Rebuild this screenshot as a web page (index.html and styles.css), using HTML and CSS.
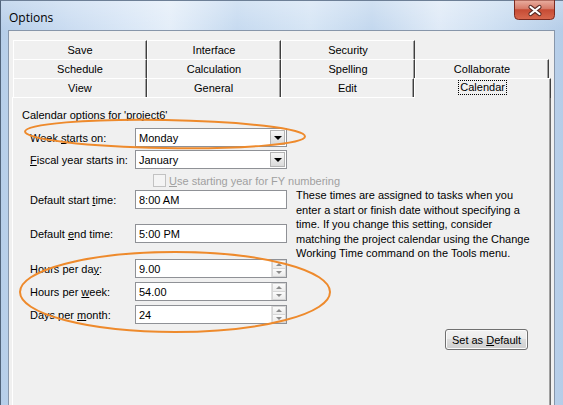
FILE: index.html
```html
<!DOCTYPE html>
<html>
<head>
<meta charset="utf-8">
<title>Options</title>
<link rel="stylesheet" href="styles.css">
</head>
<body>
<div class="window">
  <div class="titlebar">
    <span class="title">Options</span>
    <div class="close">
      <svg width="41" height="20" viewBox="0 0 41 20">
        <defs>
          <linearGradient id="cg" x1="0" y1="0" x2="0" y2="1">
            <stop offset="0" stop-color="#eab0a2"/>
            <stop offset="0.45" stop-color="#d67a68"/>
            <stop offset="0.5" stop-color="#c64b34"/>
            <stop offset="1" stop-color="#d8694f"/>
          </linearGradient>
        </defs>
        <path d="M0.5 0 H40.5 V15.5 Q40.5 19.5 36.5 19.5 H4.5 Q0.5 19.5 0.5 15.5 Z" fill="url(#cg)" stroke="#7b2a20"/>
        <path d="M16.5 7 L25.5 14 M25.5 7 L16.5 14" stroke="#5b2c26" stroke-width="4.2" stroke-linecap="round"/>
        <path d="M16.5 7 L25.5 14 M25.5 7 L16.5 14" stroke="#ffffff" stroke-width="2.2" stroke-linecap="round"/>
      </svg>
    </div>
  </div>
  <div class="client">
    <div class="tabs">
      <div class="tabrow">
        <div class="tab">Save</div>
        <div class="tab">Interface</div>
        <div class="tab">Security</div>
      </div>
      <div class="tabrow">
        <div class="tab">Schedule</div>
        <div class="tab">Calculation</div>
        <div class="tab">Spelling</div>
        <div class="tab">Collaborate</div>
      </div>
      <div class="tabrow">
        <div class="tab">View</div>
        <div class="tab">General</div>
        <div class="tab">Edit</div>
        <div class="tab selected"><span class="focus">Calendar</span></div>
      </div>
    </div>
    <div class="panel">
      <div class="group-title">Calendar options for 'project6'</div>
      <div class="form">
        <div class="row r-week">
          <span class="lbl">Week <u>s</u>tarts on:</span>
          <div class="field"><span class="val">Monday</span><span class="drop"><span class="tri"></span></span></div>
        </div>
        <div class="row r-fiscal">
          <span class="lbl"><u>F</u>iscal year starts in:</span>
          <div class="field"><span class="val">January</span><span class="drop"><span class="tri"></span></span></div>
        </div>
        <div class="r-check">
          <span class="checkbox"></span>
          <span class="check-text"><u>U</u>se starting year for FY numbering</span>
        </div>
        <div class="times">
          <div class="times-col">
            <div class="row">
              <span class="lbl">Default start <u>t</u>ime:</span>
              <div class="field"><span class="val">8:00 AM</span></div>
            </div>
            <div class="row r-end">
              <span class="lbl">Default <u>e</u>nd time:</span>
              <div class="field"><span class="val">5:00 PM</span></div>
            </div>
          </div>
          <p class="desc">These times are assigned to tasks when you<br>enter a start or finish date without specifying a<br>time. If you change this setting, consider<br>matching the project calendar using the Change<br>Working Time command on the Tools menu.</p>
        </div>
        <div class="row r-day">
          <span class="lbl">Hours per da<u>y</u>:</span>
          <div class="field"><span class="val">9.00</span><span class="spin"><span class="up"></span><span class="dn"></span></span></div>
        </div>
        <div class="row r-gap">
          <span class="lbl">Hours per <u>w</u>eek:</span>
          <div class="field"><span class="val">54.00</span><span class="spin"><span class="up"></span><span class="dn"></span></span></div>
        </div>
        <div class="row r-gap">
          <span class="lbl">Days per <u>m</u>onth:</span>
          <div class="field"><span class="val">24</span><span class="spin"><span class="up"></span><span class="dn"></span></span></div>
        </div>
      </div>
      <div class="actions">
        <button class="btn" type="button">Set as <u>D</u>efault</button>
      </div>
    </div>
  </div>
</div>
<svg class="marks" width="563" height="405" viewBox="0 0 563 405">
  <ellipse cx="165" cy="134" rx="140" ry="14" transform="rotate(1 165 134)" fill="none" stroke="#ee8a2c" stroke-width="2"/>
  <ellipse cx="175" cy="292" rx="155" ry="40" fill="none" stroke="#ee8a2c" stroke-width="2"/>
</svg>
</body>
</html>
```

FILE: styles.css
```css
* { box-sizing: border-box; }
html, body { margin: 0; padding: 0; }
body {
  position: relative;
  width: 563px;
  height: 405px;
  overflow: hidden;
  font-family: "Liberation Sans", Arial, sans-serif;
  font-size: 11px;
  color: #000;
  background: #c3d8ee;
}
.window {
  height: 405px;
  display: flex;
  flex-direction: column;
  padding: 0 8px 0 7px;
  border-left: 1px solid #50637a;
  border-top: 1px solid #6d7f96;
  background:
    linear-gradient(to bottom, rgba(255,255,255,0.25) 0px, rgba(255,255,255,0) 30px),
    linear-gradient(to right, #b6cee9 0%, #cadcf1 12%, #d8e6f6 22%, #e4eef9 30%, #c6daf0 42%, #d6e5f5 55%, #c2d7ee 66%, #dfeaf7 78%, #cddff2 88%, #b5cde8 100%);
}
.titlebar {
  height: 29px;
  display: flex;
  flex-shrink: 0;
}
.title {
  font-family: "Open Sans", "DejaVu Sans", sans-serif;
  font-size: 12px;
  margin: 9px 0 0 1px;
  line-height: 16px;
  color: #000;
}
.close {
  margin-left: auto;
  height: 20px;
  width: 41px;
  margin-top: -1px;
}
.close svg { display: block; }
.client {
  flex: 1;
  display: flex;
  flex-direction: column;
  background: #f0f0f0;
  border: 1px solid #8796aa;
  border-bottom: none;
  padding: 9px 3px 0 3px;
}
.tabs { margin-left: 1px; }
.tabrow {
  display: flex;
  height: 19px;
}
.tab {
  width: 134px;
  height: 19px;
  border-top: 1px solid #ffffff;
  border-left: 1px solid #ffffff;
  border-right: 1px solid #3f3f3f;
  box-shadow: inset -1px 0 #a0a0a0;
  text-align: center;
  line-height: 18px;
  background: #f0f0f0;
}
.tab.selected {
  position: relative;
  z-index: 1;
  width: 137px;
  height: 20px;
  margin-bottom: -1px;
  line-height: 17px;
}
.focus {
  display: inline-block;
  border: 1px dotted #000;
  padding: 0 1px;
  line-height: 13px;
}
.panel {
  flex: 1;
  border-top: 1px solid #ffffff;
  border-left: 1px solid #ffffff;
  border-right: 1px solid #696969;
  box-shadow: inset -1px 0 #a0a0a0;
  padding: 11px 0 0 9px;
}
.group-title {
  height: 13px;
  line-height: 13px;
}
.form { padding-left: 8px; }
.row {
  display: flex;
  align-items: center;
  height: 19px;
}
.lbl { width: 105px; white-space: nowrap; }
.r-week { margin-top: 6px; }
.r-fiscal { margin-top: 3px; }
.field {
  width: 152px;
  height: 19px;
  display: flex;
  align-items: center;
  background: #ffffff;
  border: 1px solid #8f9196;
  padding-left: 3px;
}
.val { flex: 1; }
.drop {
  width: 15px;
  height: 15px;
  margin-right: 1px;
  border: 1px solid #b3b3b3;
  background: linear-gradient(#f6f6f6, #dadada);
  display: flex;
  align-items: center;
  justify-content: center;
}
.tri {
  width: 0;
  height: 0;
  border-left: 4px solid transparent;
  border-right: 4px solid transparent;
  border-top: 4px solid #000;
  margin-top: 1px;
}
.spin {
  width: 15px;
  height: 17px;
  display: flex;
  flex-direction: column;
  border-left: 1px solid #e0e0e0;
}
.spin .up, .spin .dn {
  flex: 1;
  display: flex;
  align-items: center;
  justify-content: center;
  background: linear-gradient(#fbfbfb, #ececec);
  border: 1px solid #d6d6d6;
}
.spin .dn { border-top: none; }
.spin .up::after {
  content: "";
  border-left: 3px solid transparent;
  border-right: 3px solid transparent;
  border-bottom: 3px solid #8c8c8c;
}
.spin .dn::after {
  content: "";
  border-left: 3px solid transparent;
  border-right: 3px solid transparent;
  border-top: 3px solid #8c8c8c;
}
.r-check {
  display: flex;
  align-items: center;
  height: 13px;
  margin-top: 5px;
  padding-left: 123px;
}
.checkbox {
  width: 13px;
  height: 13px;
  border: 1px solid #c2c2c2;
  background: #f4f4f4;
}
.check-text {
  margin-left: 3px;
  color: #a0a0a0;
  white-space: nowrap;
}
.times {
  display: flex;
  align-items: flex-start;
  height: 53px;
  margin-top: 3px;
}
.times-col { width: 257px; }
.r-end { margin-top: 15px; }
.desc {
  margin: -2px 0 0 9px;
  line-height: 14.5px;
  white-space: nowrap;
}
.r-day { margin-top: 16px; }
.r-gap { margin-top: 4px; }
.actions {
  display: flex;
  justify-content: flex-end;
  margin-top: 5px;
  padding-right: 22px;
}
.btn {
  width: 83px;
  height: 21px;
  padding: 0;
  font-family: "Liberation Sans", Arial, sans-serif;
  font-size: 11px;
  color: #000;
  border: 1px solid #707070;
  border-radius: 3px;
  background: linear-gradient(#f2f2f2 0%, #ebebeb 50%, #dddddd 50%, #cfcfcf 100%);
  box-shadow: inset 0 0 0 1px #fbfbfb;
}
.marks {
  position: absolute;
  left: 0;
  top: 0;
  pointer-events: none;
}
```
